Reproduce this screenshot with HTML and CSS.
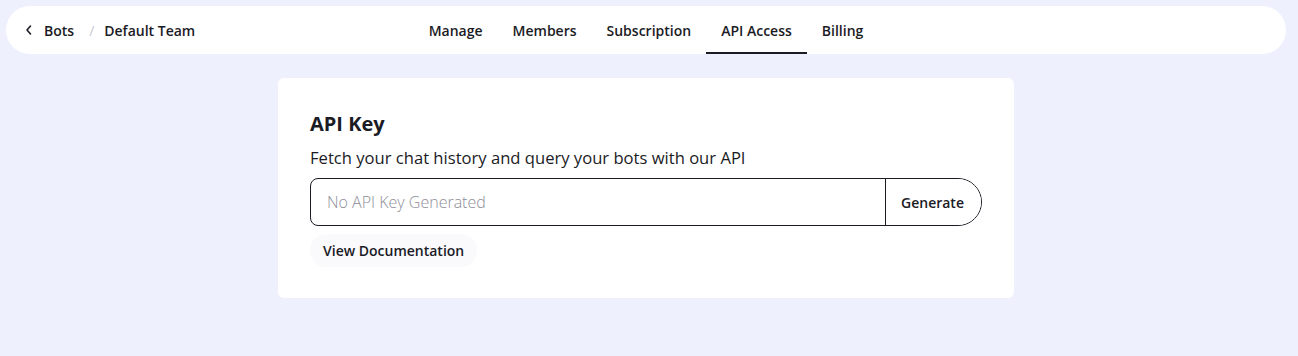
FILE: index.html
```html
<!DOCTYPE html>
<html lang="en">
<head>
    <meta charset="UTF-8">
    <title>API Access</title>
    <link rel="stylesheet" href="styles.css">
</head>
<body>
    <header class="topbar">
        <nav class="crumbs">
            <a class="crumb back" href="#">
                <svg width="10" height="12" viewBox="0 0 10 12"><path d="M6.5 2 3 6l3.5 4" fill="none" stroke="#1b1b25" stroke-width="1.6" stroke-linecap="round" stroke-linejoin="round"/></svg>
                Bots
            </a>
            <span class="sep">/</span>
            <span class="crumb">Default Team</span>
        </nav>
        <div class="tabs">
            <a class="tab" href="#">Manage</a>
            <a class="tab" href="#">Members</a>
            <a class="tab" href="#">Subscription</a>
            <a class="tab active" href="#">API Access</a>
            <a class="tab" href="#">Billing</a>
        </div>
    </header>

    <main class="content">
        <section class="card">
            <h2 class="card-title">API Key</h2>
            <p class="card-desc">Fetch your chat history and query your bots with our API</p>
            <div class="key-row">
                <input class="key-input" type="text" placeholder="No API Key Generated" readonly>
                <button class="gen-btn" type="button">Generate</button>
            </div>
            <a class="doc-btn" href="#">View Documentation</a>
        </section>
    </main>
</body>
</html>
```

FILE: styles.css
```css
* {
    margin: 0;
    padding: 0;
    box-sizing: border-box;
}

html, body {
    height: 100%;
}

body {
    background: #eef1fd;
    font-family: "Open Sans", Lato, sans-serif;
    color: #1b1b25;
    padding: 6px 12px 0 6px;
}

a {
    color: inherit;
    text-decoration: none;
}

.topbar {
    height: 48px;
    background: #fff;
    border-radius: 24px;
    display: grid;
    grid-template-columns: 1fr auto 1fr;
    align-items: center;
}

.crumbs {
    display: flex;
    align-items: center;
    padding-left: 18px;
    font-size: 14px;
    font-weight: 600;
}

.crumb.back {
    display: flex;
    align-items: center;
    gap: 10px;
}

.sep {
    color: #c9c9d2;
    font-weight: 400;
    margin: 0 10px 0 15px;
}

.tabs {
    display: flex;
    height: 100%;
    padding: 0 16px;
}

.tab {
    height: 100%;
    display: flex;
    align-items: center;
    padding: 0 15px;
    font-size: 14px;
    font-weight: 600;
    border-bottom: 2px solid transparent;
    padding-top: 2px;
}

.tab.active {
    border-bottom-color: #1b1b25;
}

.content {
    display: flex;
    justify-content: center;
    padding-top: 24px;
}

.card {
    width: 736px;
    background: #fff;
    border-radius: 6px;
    padding: 34px 32px 31px;
}

.card-title {
    font-size: 20px;
    font-weight: 700;
    line-height: 24px;
}

.card-desc {
    font-size: 16.6px;
    margin-top: 12px;
    line-height: 20px;
}

.key-row {
    display: flex;
    height: 48px;
    margin-top: 10px;
    border: 1px solid #1b1b25;
    border-radius: 8px 24px 24px 8px;
    overflow: hidden;
}

.key-input {
    flex: 1;
    border: none;
    outline: none;
    padding-left: 16px;
    font-family: inherit;
    font-size: 16px;
    font-weight: 300;
    color: #1b1b25;
    background: transparent;
}

.key-input::placeholder {
    color: #8e8e98;
}

.gen-btn {
    width: 96px;
    border: none;
    border-left: 1px solid #1b1b25;
    background: #fff;
    font-family: inherit;
    font-size: 14px;
    font-weight: 600;
    color: #1b1b25;
    padding-right: 2px;
}

.doc-btn {
    display: inline-block;
    margin-top: 8px;
    padding: 7px 13px;
    border-radius: 16px;
    background: #fafafd;
    font-size: 14px;
    font-weight: 600;
}
```
